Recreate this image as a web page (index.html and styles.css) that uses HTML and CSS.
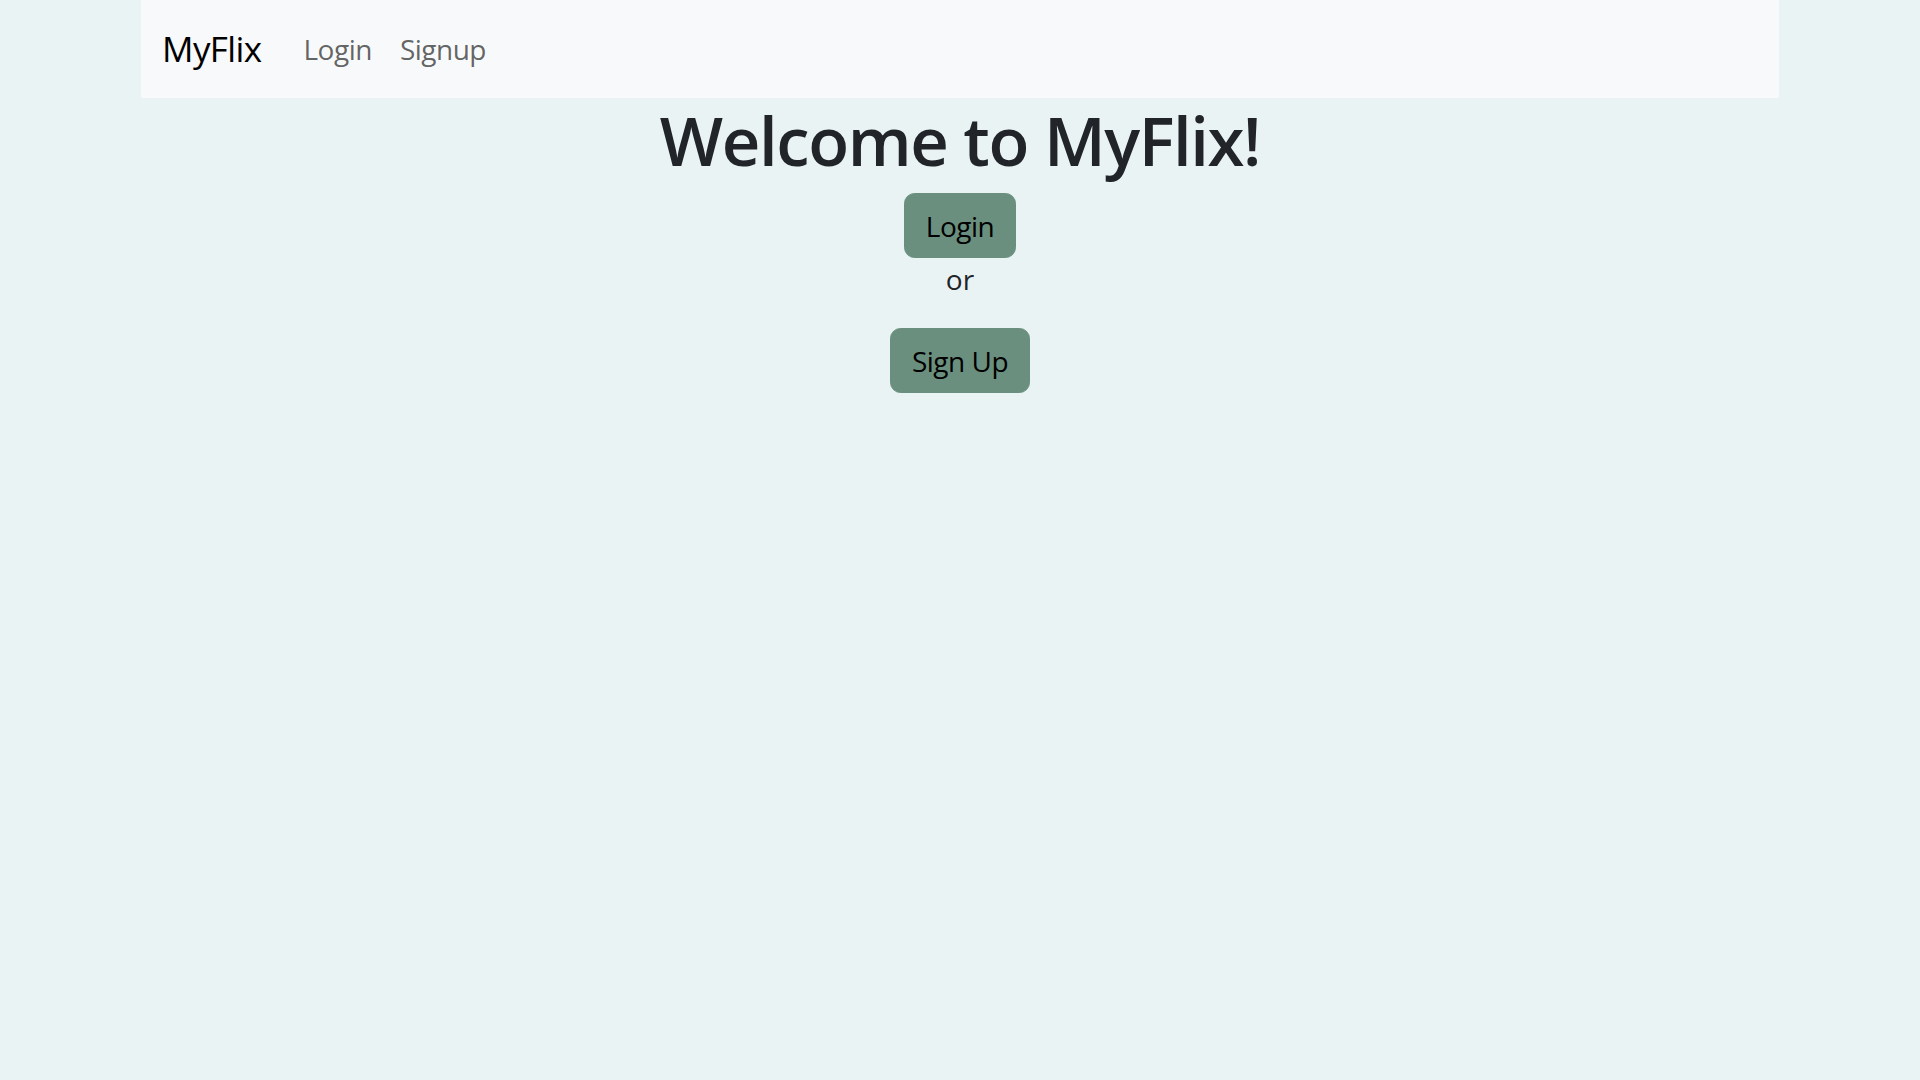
FILE: index.html
```html
<!DOCTYPE html>
<html lang="en">
<head>
<meta charset="utf-8">
<title>MyFlix</title>
<link rel="stylesheet" href="styles.css">
</head>
<body>
<div class="container">
  <nav class="navbar">
    <a class="brand" href="#">MyFlix</a>
    <div class="nav">
      <a class="nav-link" href="#">Login</a>
      <a class="nav-link" href="#">Signup</a>
    </div>
  </nav>
  <main class="welcome">
    <h1 class="title">Welcome to MyFlix!</h1>
    <button class="btn">Login</button>
    <p class="or">or</p>
    <button class="btn">Sign Up</button>
  </main>
</div>
</body>
</html>
```

FILE: styles.css
```css
html, body {
  margin: 0;
  padding: 0;
}
body {
  background: #eaf3f4;
  font-family: "Open Sans", "Noto Sans", "DejaVu Sans", sans-serif;
  color: #212529;
  font-size: 28px;
  line-height: 1.5;
}
.container {
  width: 1638px;
  margin: 0 auto;
}
.navbar {
  display: flex;
  align-items: center;
  background: #f8f9fa;
  padding: 14px 21px;
}
.brand {
  font-size: 35px;
  line-height: 1.5;
  padding: 8.75px 0;
  margin-right: 28px;
  color: #000;
  text-decoration: none;
  letter-spacing: -0.6px;
}
.nav {
  display: flex;
}
.nav-link {
  font-size: 28px;
  line-height: 1.5;
  padding: 14px;
  color: rgba(0, 0, 0, 0.62);
  text-decoration: none;
  letter-spacing: -0.5px;
}
.welcome {
  display: flex;
  flex-direction: column;
  align-items: center;
  text-align: center;
}
.title {
  font-size: 67px;
  font-weight: 600;
  line-height: 84px;
  margin: 0 0 11px;
  color: #212529;
  letter-spacing: -1.4px;
}
.btn {
  font-family: inherit;
  font-size: 28px;
  line-height: 1.5;
  padding: 10.5px 21px;
  border: 1.75px solid #6b8f7e;
  border-radius: 10.5px;
  background: #6b8f7e;
  color: #000;
  letter-spacing: -0.5px;
  cursor: pointer;
}
.or {
  margin: 0 0 28px;
  color: #212529;
}
```
